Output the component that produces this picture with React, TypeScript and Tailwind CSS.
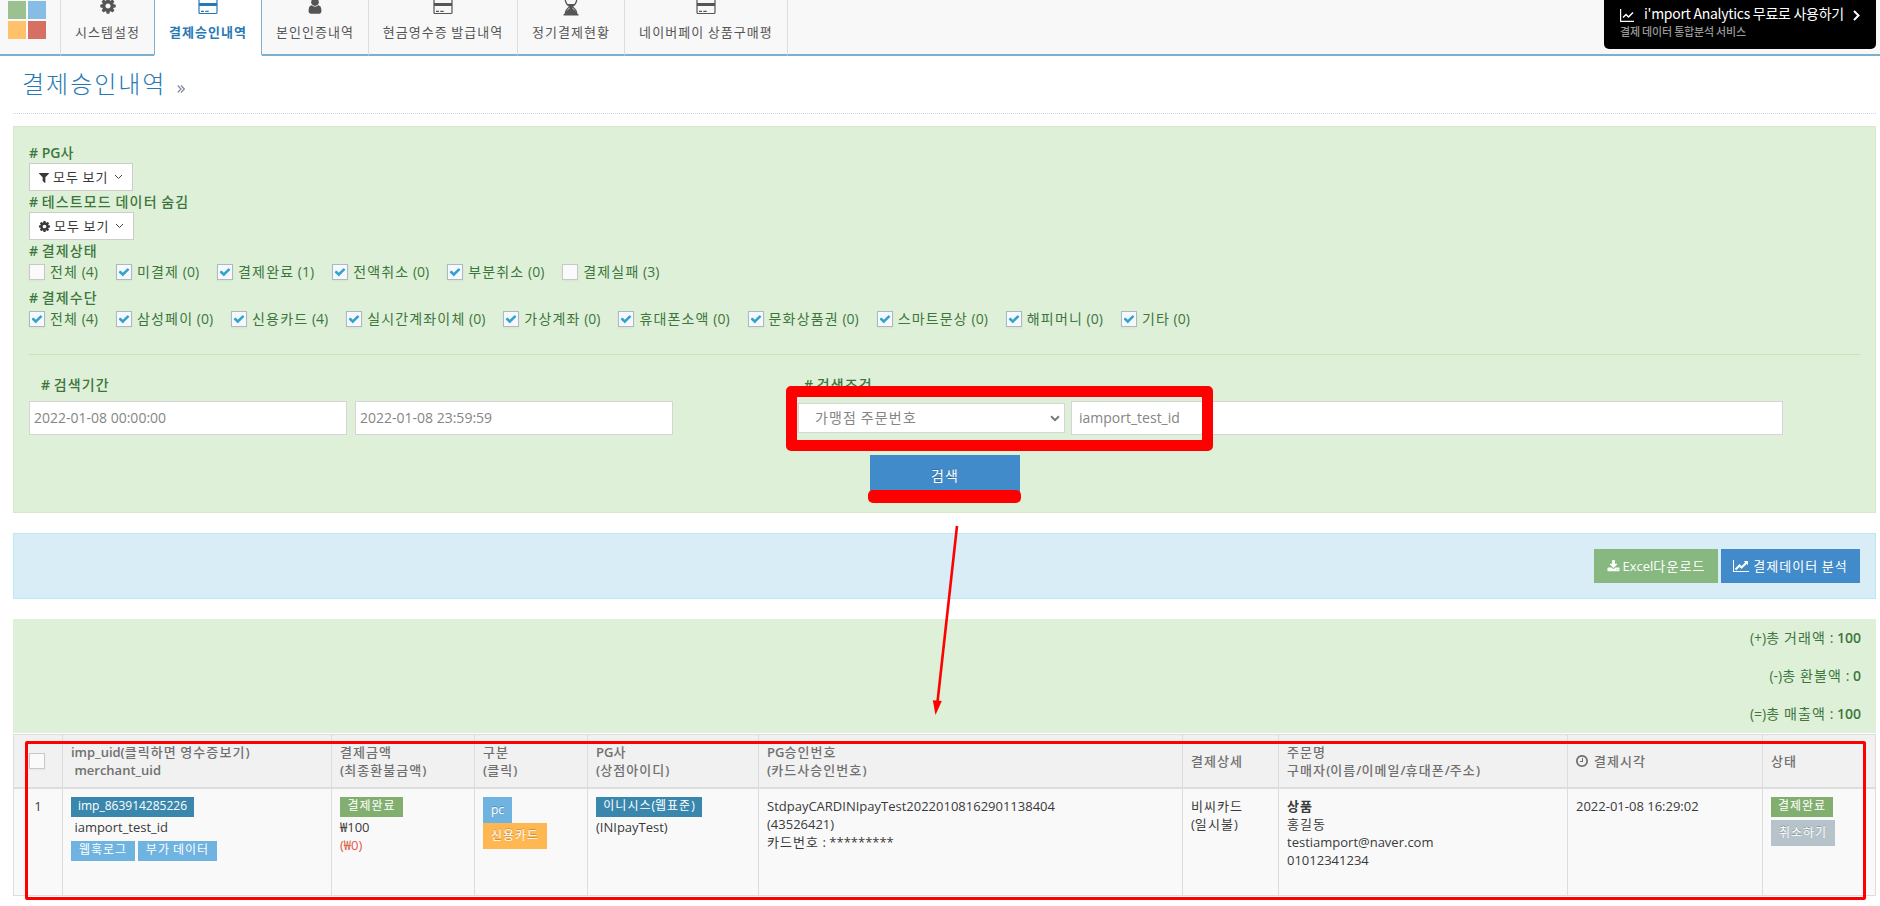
import React from 'react';

const HANGUL = /([\u3131-\u318e\uac00-\ud7a3]+)/;

const T = ({ children, className = '' }: { children: string; className?: string }) => (
  <>
    {children.split(HANGUL).map((part, i) =>
      i % 2 === 1 ? <span key={i} className={`tracking-[0.083em] ${className}`}>{part}</span> : part
    )}
  </>
);

interface IconProps {
  className?: string;
}

const CogIcon = ({ className }: IconProps) => (
  <svg viewBox="0 0 1792 1792" fill="currentColor" className={className}>
    <path d="M1152 896q0-106-75-181t-181-75-181 75-75 181 75 181 181 75 181-75 75-181zm512-109v222q0 12-8 23t-20 13l-185 28q-19 54-39 91 35 50 107 138 10 12 10 25t-9 23q-27 37-99 108t-94 71q-12 0-26-9l-138-108q-44 23-91 38-16 136-29 186-7 28-36 28h-222q-14 0-24.5-8.5t-11.5-21.5l-28-184q-49-16-90-37l-141 107q-10 9-25 9-14 0-25-11-126-114-165-168-7-10-7-23 0-12 8-23 15-21 51-66.5t54-70.5q-27-50-41-99l-183-27q-13-2-21-12.5t-8-23.5v-222q0-12 8-23t19-13l186-28q14-46 39-92-40-57-107-138-10-12-10-24 0-10 9-23 26-36 98.5-107.5t94.5-71.5q13 0 26 10l138 107q44-23 91-38 16-136 29-186 7-28 36-28h222q14 0 24.5 8.5t11.5 21.5l28 184q49 16 90 37l142-107q9-9 24-9 13 0 25 10 129 119 165 170 7 8 7 22 0 12-8 23-15 21-51 66.5t-54 70.5q26 50 41 98l183 28q13 2 21 12.5t8 23.5z" />
  </svg>
);

const UserIcon = ({ className }: IconProps) => (
  <svg viewBox="0 0 1792 1792" fill="currentColor" className={className}>
    <path d="M1536 1399q0 109-62.5 187t-150.5 78h-854q-88 0-150.5-78t-62.5-187q0-85 8.5-160.5t31.5-152 58.5-131 94-89 134.5-34.5q131 128 313 128t313-128q76 0 134.5 34.5t94 89 58.5 131 31.5 152 8.5 160.5zm-256-887q0 159-112.5 271.5t-271.5 112.5-271.5-112.5-112.5-271.5 112.5-271.5 271.5-112.5 271.5 112.5 112.5 271.5z" />
  </svg>
);

const CardIcon = ({ className }: IconProps) => (
  <svg viewBox="0 0 20 18" fill="none" className={className}>
    <rect x="1" y="1.500" width="18" height="15" rx="1" stroke="currentColor" strokeWidth="1.200" />
    <path d="M1 6h18v3H1z" fill="currentColor" />
    <path d="M3 14.300h3M7.300 14.300h3.400" stroke="currentColor" strokeWidth="1.300" />
  </svg>
);

const HourglassIcon = ({ className }: IconProps) => (
  <svg viewBox="0 0 16 18" fill="none" className={className}>
    <path d="M0.500 1h15M0.500 17.300h15" stroke="currentColor" strokeWidth="1.600" />
    <path d="M2.200 1c0 4.500 1.800 6.500 4.600 8.300C4 11 2.200 13 2.200 17M13.800 1c0 4.500-1.800 6.500-4.600 8.300C12 11 13.800 13 13.800 17" stroke="currentColor" strokeWidth="1.300" />
    <path d="M4.500 6.500h7L9.500 9v2q3.500 1.800 4.300 5.500H2.200q.8-3.700 4.300-5.500V9z" fill="currentColor" />
  </svg>
);

const FilterIcon = ({ className }: IconProps) => (
  <svg viewBox="192 0 1408 1792" fill="currentColor" className={className}>
    <path d="M1595 295q17 41-14 70l-493 493v742q0 42-39 59-13 5-25 5-27 0-45-19l-256-256q-19-19-19-45v-486l-493-493q-31-29-14-70 17-39 59-39h1280q42 0 59 39z" />
  </svg>
);

const CheckIcon = ({ className }: IconProps) => (
  <svg viewBox="0 0 1792 1792" fill="currentColor" className={className}>
    <path d="M1671 566q0 40-28 68l-724 724-136 136q-28 28-68 28t-68-28l-136-136-362-362q-28-28-28-68t28-68l136-136q28-28 68-28t68 28l294 295 656-657q28-28 68-28t68 28l136 136q28 28 28 68z" />
  </svg>
);

const DownloadIcon = ({ className }: IconProps) => (
  <svg viewBox="0 0 1792 1792" fill="currentColor" className={className}>
    <path d="M1344 1344q0-26-19-45t-45-19-45 19-19 45 19 45 45 19 45-19 19-45zm256 0q0-26-19-45t-45-19-45 19-19 45 19 45 45 19 45-19 19-45zm128-224v320q0 40-28 68t-68 28h-1472q-40 0-68-28t-28-68v-320q0-40 28-68t68-28h465l135 136q58 56 136 56t136-56l136-136h464q40 0 68 28t28 68zm-325-569q17 41-14 70l-448 448q-18 19-45 19t-45-19l-448-448q-31-29-14-70 17-39 59-39h256v-448q0-26 19-45t45-19h256q26 0 45 19t19 45v448h256q42 0 59 39z" />
  </svg>
);

const ChartIcon = ({ className }: IconProps) => (
  <svg viewBox="-128 0 2048 1792" fill="currentColor" className={className}>
    <path d="M1920 1536v128h-2048v-1536h128v1408h1920zm-128-1248v435q0 21-19.5 29.5t-35.5-7.5l-121-121-633 633q-10 10-23 10t-23-10l-233-233-416 416-192-192 585-585q10-10 23-10t23 10l233 233 464-464-121-121q-16-16-7.5-35.5t29.5-19.5h435q14 0 23 9t9 23z" />
  </svg>
);

const ClockIcon = ({ className }: IconProps) => (
  <svg viewBox="128 128 1536 1536" fill="currentColor" className={className}>
    <path d="M1024 544v448q0 14-9 23t-23 9h-320q-14 0-23-9t-9-23v-64q0-14 9-23t23-9h224v-352q0-14 9-23t23-9h64q14 0 23 9t9 23zm416 352q0-148-73-273t-198-198-273-73-273 73-198 198-73 273 73 273 198 198 273 73 273-73 198-198 73-273zm224 0q0 209-103 385.5t-279.5 279.5-385.5 103-385.5-103-279.5-279.5-103-385.5 103-385.5 279.5-279.5 385.5-103 385.5 103 279.5 279.5 103 385.5z" />
  </svg>
);

const AngleDown = ({ className }: IconProps) => (
  <svg viewBox="0 0 9 6" fill="none" stroke="currentColor" className={className}>
    <path d="M1 1l3.500 3.500L8 1" />
  </svg>
);

const tabs = [
  { label: '시스템설정', icon: <CogIcon className="h-[18px] w-[18px]" />, width: 'w-[93px]' },
  { label: '결제승인내역', icon: <CardIcon className="h-[18px] w-5" />, width: 'w-[108px]', active: true },
  { label: '본인인증내역', icon: <UserIcon className="h-[18px] w-[18px]" />, width: 'w-[107px]' },
  { label: '현금영수증 발급내역', icon: <CardIcon className="h-[18px] w-5" />, width: 'w-[149px]' },
  { label: '정기결제현황', icon: <HourglassIcon className="h-[19px] w-4" />, width: 'w-[107px]' },
  { label: '네이버페이 상품구매평', icon: <CardIcon className="h-[18px] w-5" />, width: 'w-[163px]' },
];

const statuses = [
  { label: '전체 (4)', checked: false },
  { label: '미결제 (0)', checked: true },
  { label: '결제완료 (1)', checked: true },
  { label: '전액취소 (0)', checked: true },
  { label: '부분취소 (0)', checked: true },
  { label: '결제실패 (3)', checked: false },
];

const methods = [
  '전체 (4)', '삼성페이 (0)', '신용카드 (4)', '실시간계좌이체 (0)', '가상계좌 (0)',
  '휴대폰소액 (0)', '문화상품권 (0)', '스마트문상 (0)', '해피머니 (0)', '기타 (0)',
].map((label) => ({ label, checked: true }));

const totals = [
  { label: '(+)총 거래액 : ', value: '100' },
  { label: '(-)총 환불액 : ', value: '0' },
  { label: '(=)총 매출액 : ', value: '100' },
];

const Checkbox = ({ checked }: { checked: boolean }) => (
  <span
    className={`flex h-4 w-4 shrink-0 items-center justify-center border shadow-[0_1px_2px_rgba(0,0,0,0.05)] ${checked ? 'border-[#adb8c0] bg-[#f5f8fc]' : 'border-[#c8c8c8] bg-[#fafafa]'}`}
  >
    {checked && <CheckIcon className="h-3 w-3 shrink-0 text-[#32a3ce]" />}
  </span>
);

const CheckRow = ({ items }: { items: { label: string; checked: boolean }[] }) => (
  <div className="flex h-5 items-center gap-[18px]">
    {items.map((item) => (
      <label key={item.label} className="flex items-center gap-[5px] whitespace-nowrap">
        <Checkbox checked={item.checked} />
        <span><T>{item.label}</T></span>
      </label>
    ))}
  </div>
);

const Heading = ({ children }: { children: string }) => (
  <div className="h-5 font-semibold leading-5"><T className="font-medium">{children}</T></div>
);

const Label = ({ className, children }: { className: string; children: string }) => (
  <span className={`flex h-5 items-center justify-center text-[12px] whitespace-nowrap text-white ${className}`}>
    <span className="-mt-0.5"><T>{children}</T></span>
  </span>
);

const Th = ({ lines, children }: { lines?: string[]; children?: React.ReactNode }) => (
  <th className="border border-b-2 border-[#ddd] px-2 text-left align-middle font-semibold">
    {lines?.map((line) => (
      <div key={line} className="whitespace-pre"><T className="font-medium">{line}</T></div>
    ))}
    {children}
  </th>
);

const Td = ({ children }: { children: React.ReactNode }) => (
  <td className="border border-t-2 border-[#ddd] px-2 pt-2 text-left align-top">{children}</td>
);

const App: React.FC = () => {
  return (
    <div className="relative h-[906px] w-[1880px] overflow-hidden bg-white font-['Open_Sans','Noto_Sans_CJK_KR',sans-serif] text-[14px] leading-5 text-[#393939]">
      {/* Top navigation */}
      <header className="flex h-14 overflow-hidden bg-[#f8f8f8] text-[#555]">
        <div className="w-[61px] border-r border-b-2 border-r-[#ddd] border-b-[#79b0ce] pt-px pl-2">
          <div className="grid w-[38px] grid-cols-2 gap-[2px]">
            <span className="h-[18px] bg-[#9ac18f]" />
            <span className="h-[18px] bg-[#86bde4]" />
            <span className="h-[18px] bg-[#ffc26b]" />
            <span className="h-[18px] bg-[#d67062]" />
          </div>
        </div>
        {tabs.map((tab, i) => (
          <div
            key={tab.label}
            className={`flex shrink-0 flex-col items-center border-b-2 ${tab.width} ${tab.active ? 'border-x border-x-[#79b0ce] border-b-white bg-white font-semibold text-[#2679b5]' : `border-b-[#79b0ce] ${i > 0 ? 'border-r border-r-[#ddd]' : ''}`}`}
          >
            <span className="-mt-[3px] block h-[18px]">{tab.icon}</span>
            <span className="mt-[7px] text-[13px] whitespace-nowrap"><T>{tab.label}</T></span>
          </div>
        ))}
        <div className="flex flex-1 justify-end border-b-2 border-b-[#79b0ce] pr-1">
          <div className="h-[49px] w-[272px] rounded-b-[5px] bg-black pl-4 font-['Noto_Sans_CJK_KR',sans-serif] text-white">
            <div className="mt-1 flex h-5 items-center text-[14px] tracking-[-0.28px]">
              <svg viewBox="0 0 14 13" fill="none" stroke="currentColor" className="mt-[3px] mr-[10px] h-[13px] w-[14px] shrink-0">
                <path d="M0.600 0v12.400H14" strokeWidth="1.200" />
                <path d="M3 8.500l3-3 2.500 2.500L13 3.500" strokeWidth="1.500" />
              </svg>
              <span className="w-[199px] -translate-y-px whitespace-nowrap">i'mport Analytics 무료로 사용하기</span>
              <svg viewBox="0 0 7 11" fill="none" stroke="currentColor" strokeWidth="2" className="mt-[3px] ml-[10px] h-[11px] w-[7px]">
                <path d="M1 1l4.500 4.500L1 10" />
              </svg>
            </div>
            <div className="-mt-px text-[11px] leading-4 font-medium tracking-[-0.2px] text-[#999]">결제 데이터 통합분석 서비스</div>
          </div>
        </div>
      </header>

      <main className="pr-1 pl-[13px]">
        {/* Page title */}
        <div className="flex h-[58px] items-center border-b border-dotted border-[#d5d5d5] pb-[2px] pl-[9px] text-[#2679b5]">
          <h1 className="text-[24px] leading-8 font-light"><T>결제승인내역</T></h1>
          <svg viewBox="0 0 8 8" fill="none" stroke="currentColor" className="mt-[10px] ml-[11px] h-2 w-2 text-[#8089a0]">
            <path d="M0.700 0.500L4 4 0.700 7.500M4 0.500L7.300 4 4 7.500" strokeWidth="1.200" />
          </svg>
        </div>

        {/* Filters */}
        <section className="mt-3 h-[387px] border border-[#d6e9c6] bg-[#dff0d8] px-[15px] pt-4 text-[#3c763d]">
          <Heading># PG사</Heading>
          <button className="flex h-7 w-[104px] items-center border border-[#ccc] bg-white pl-[9px] text-[13px] text-[#393939]">
            <FilterIcon className="mr-1 h-[13px] w-[10px]" />
            <span><T>모두 보기</T></span>
            <AngleDown className="ml-[5px] h-[6px] w-[9px] text-[#444]" />
          </button>
          <div className="mt-px"><Heading># 테스트모드 데이터 숨김</Heading></div>
          <button className="flex h-7 w-[105px] items-center border border-[#ccc] bg-white pl-[9px] text-[13px] text-[#393939]">
            <CogIcon className="-ml-px mr-[3px] h-[13px] w-[13px]" />
            <span><T>모두 보기</T></span>
            <AngleDown className="ml-[5px] h-[6px] w-[9px] text-[#444]" />
          </button>
          <div className="mt-px"><Heading># 결제상태</Heading></div>
          <div className="mt-px"><CheckRow items={statuses} /></div>
          <div className="mt-[6px]"><Heading># 결제수단</Heading></div>
          <div className="mt-px"><CheckRow items={methods} /></div>

          <hr className="mt-[25px] border-t border-[#c9e2b3]" />

          <div className="mt-5 flex">
            <div className="w-[769px]">
              <div className="pl-3"><Heading># 검색기간</Heading></div>
              <div className="mt-[6px] flex gap-2 text-[#858585]">
                <div className="h-[34px] w-[318px] border border-[#d5d5d5] bg-white px-1 leading-8">2022-01-08 00:00:00</div>
                <div className="h-[34px] w-[318px] border border-[#d5d5d5] bg-white px-1 leading-8">2022-01-08 23:59:59</div>
              </div>
            </div>
            <div>
              <div className="pl-[6px]"><Heading># 검색조건</Heading></div>
              <div className="mt-[6px] flex items-center gap-[6px] text-[#858585]">
                <div className="flex h-[30px] w-[267px] items-center justify-between border border-[#d5d5d5] bg-white pr-1 pl-4">
                  <span><T>가맹점 주문번호</T></span>
                  <AngleDown className="h-[7px] w-[10px] stroke-[1.8] text-[#777]" />
                </div>
                <div className="h-[34px] w-[712px] border border-[#d5d5d5] bg-white px-[7px] leading-8">iamport_test_id</div>
              </div>
            </div>
          </div>
          <button className="mt-5 ml-[841px] flex h-[42px] w-[150px] items-center justify-center bg-[#428bca] text-white [text-shadow:0_-1px_0_rgba(0,0,0,0.25)]">
            <T>검색</T>
          </button>
        </section>

        {/* Download and analytics */}
        <section className="mt-5 flex h-[66px] items-center justify-end gap-[3px] border border-[#bce8f1] bg-[#d9edf7] pr-[15px] text-[13px] text-white [text-shadow:0_-1px_0_rgba(0,0,0,0.25)]">
          <button className="flex h-[34px] w-[124px] items-center justify-center gap-[3px] bg-[#87b87f] whitespace-nowrap">
            <DownloadIcon className="h-[13px] w-[13px]" />
            <span><T>Excel다운로드</T></span>
          </button>
          <button className="flex h-[34px] w-[139px] items-center justify-center gap-1 bg-[#428bca] whitespace-nowrap">
            <ChartIcon className="h-[14px] w-4" />
            <span><T>결제데이터 분석</T></span>
          </button>
        </section>

        {/* Totals */}
        <section className="mt-5 h-[114px] bg-[#dff0d8] pr-[15px] text-right text-[#3c763d]">
          {totals.map((total) => (
            <div key={total.label} className="h-[38px] leading-[38px]">
              <T>{total.label}</T>
              <span className="font-semibold">{total.value}</span>
            </div>
          ))}
        </section>

        {/* Payments */}
        <table className="mt-px w-[1863px] table-fixed border-collapse text-[13px] leading-[18px]">
          <colgroup>
            <col className="w-[49px]" />
            <col className="w-[269px]" />
            <col className="w-[143px]" />
            <col className="w-[113px]" />
            <col className="w-[171px]" />
            <col className="w-[424px]" />
            <col className="w-[96px]" />
            <col className="w-[289px]" />
            <col className="w-[195px]" />
            <col />
          </colgroup>
          <thead>
            <tr className="h-[53px] bg-[#f1f1f1] text-[#707070]">
              <Th><div className="pl-[7px]"><Checkbox checked={false} /></div></Th>
              <Th lines={['imp_uid(클릭하면 영수증보기)', ' merchant_uid']} />
              <Th lines={['결제금액', '(최종환불금액)']} />
              <Th lines={['구분', '(클릭)']} />
              <Th lines={['PG사', '(상점아이디)']} />
              <Th lines={['PG승인번호', '(카드사승인번호)']} />
              <Th lines={['결제상세']} />
              <Th lines={['주문명', '구매자(이름/이메일/휴대폰/주소)']} />
              <Th>
                <span className="flex items-center gap-[6px]">
                  <ClockIcon className="h-3 w-3" />
                  <span><T className="font-medium">결제시각</T></span>
                </span>
              </Th>
              <Th lines={['상태']} />
            </tr>
          </thead>
          <tbody>
            <tr className="h-[108px] bg-[#f9f9f9]">
              <Td><div className="text-center">1</div></Td>
              <Td>
                <Label className="w-[123px] bg-[#3a87ad]">imp_863914285226</Label>
                <div className="mt-px">&nbsp;iamport_test_id</div>
                <div className="mt-[5px] flex gap-[3px]">
                  <Label className="w-16 bg-[#6fb3e0]">웹훅로그</Label>
                  <Label className="w-[79px] bg-[#6fb3e0]">부가 데이터</Label>
                </div>
              </Td>
              <Td>
                <Label className="w-[63px] bg-[#82af6f]">결제완료</Label>
                <div className="mt-px">₩100</div>
                <div className="text-[#dd5a43]">(₩0)</div>
              </Td>
              <Td>
                <div className="flex flex-col items-start text-[12px] text-white [text-shadow:0_-1px_0_rgba(0,0,0,0.25)]">
                  <span className="h-[26px] w-[29px] bg-[#6fb3e0] text-center leading-[26px]">pc</span>
                  <span className="h-[26px] w-16 bg-[#ffb752] text-center leading-[26px]"><T>신용카드</T></span>
                </div>
              </Td>
              <Td>
                <Label className="w-[106px] bg-[#3a87ad]">이니시스(웹표준)</Label>
                <div className="mt-px">(INIpayTest)</div>
              </Td>
              <Td>
                StdpayCARDINIpayTest20220108162901138404<br />
                (43526421)<br />
                <T>카드번호 : *********</T>
              </Td>
              <Td><T>비씨카드</T><br /><T>(일시불)</T></Td>
              <Td>
                <span className="font-semibold"><T>상품</T></span><br />
                <T>홍길동</T><br />
                testiamport@naver.com<br />
                01012341234
              </Td>
              <Td>2022-01-08 16:29:02</Td>
              <Td>
                <div className="flex flex-col items-start gap-[3px]">
                  <Label className="w-[62px] bg-[#82af6f]">결제완료</Label>
                  <span className="h-[26px] w-16 bg-[#b6c3cb] text-center text-[12px] leading-[26px] text-white [text-shadow:0_-1px_0_rgba(0,0,0,0.25)]">
                    <T>취소하기</T>
                  </span>
                </div>
              </Td>
            </tr>
          </tbody>
        </table>
      </main>

      {/* Red guide marks over the page */}
      <div className="absolute top-[386px] left-[786px] h-[65px] w-[427px] rounded-[5px] border-[11px] border-[#f00]" />
      <div className="absolute top-[490px] left-[868px] h-[13px] w-[153px] rounded-[5px] bg-[#f00]" />
      <div className="absolute top-[741px] left-[25px] h-[159px] w-[1841px] rounded-[2px] border-[3px] border-[#f00]" />
      <svg viewBox="0 0 30 192" className="absolute top-[524px] left-[930px] h-[192px] w-[30px]">
        <path d="M27 2L7.500 178" stroke="#f00" strokeWidth="2.600" fill="none" />
        <path d="M2.800 176.300l9 0.800-6.300 14z" fill="#f00" />
      </svg>
    </div>
  );
};

export default App;
